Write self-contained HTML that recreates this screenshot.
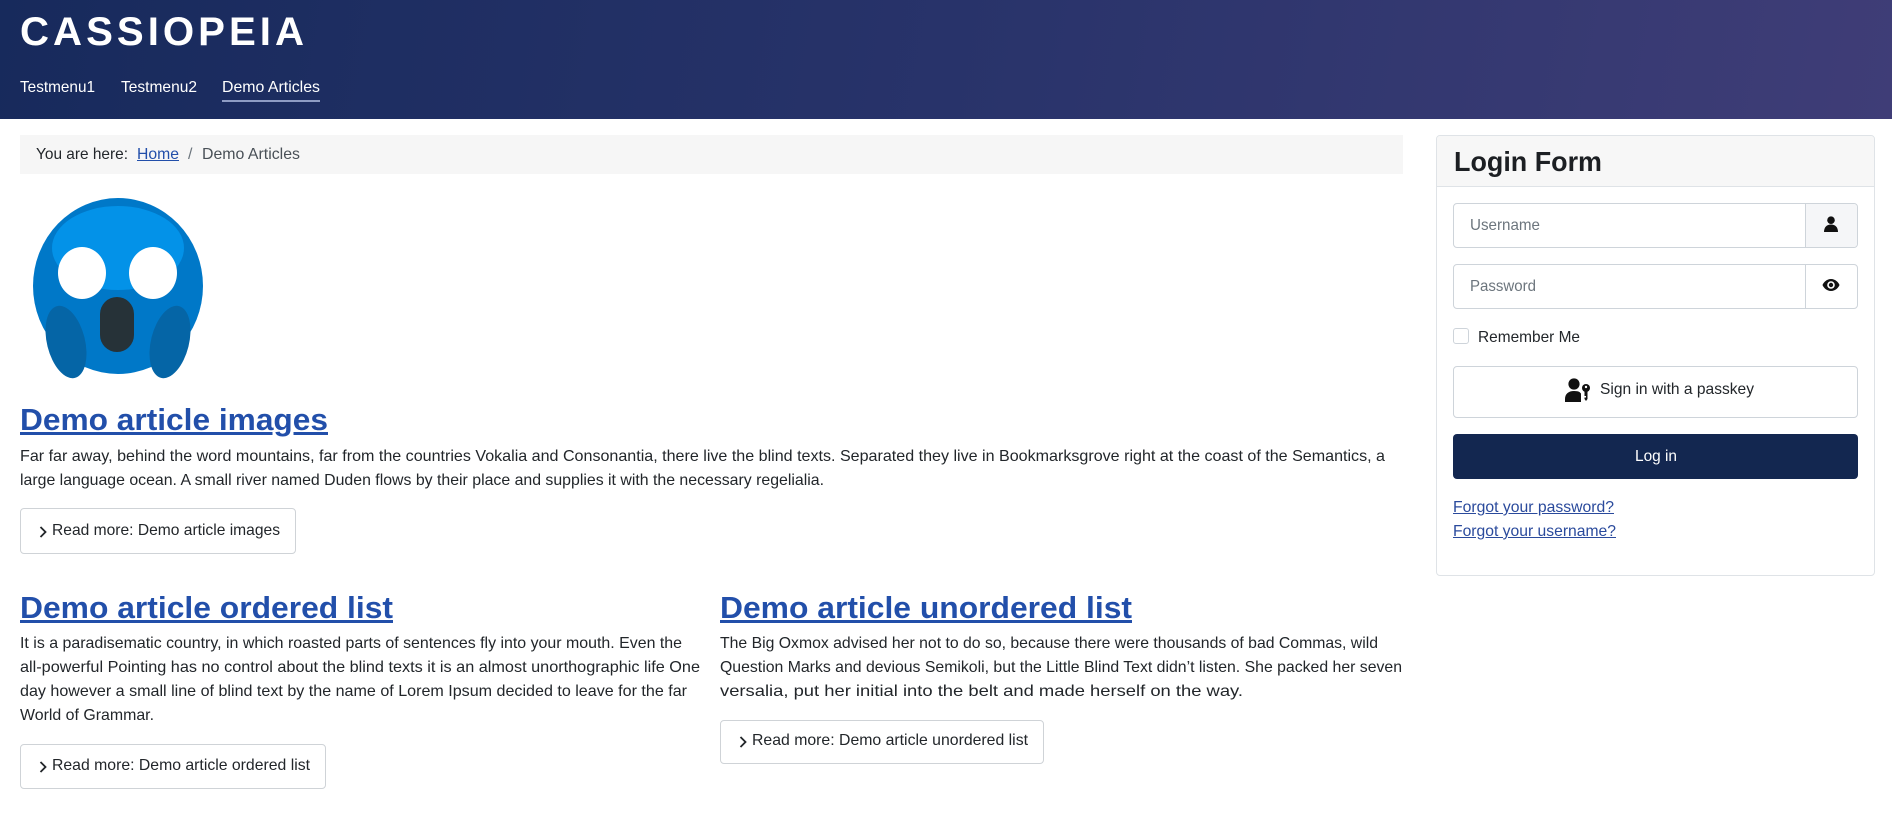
<!DOCTYPE html>
<html><head><meta charset="utf-8">
<style>
*{margin:0;padding:0;box-sizing:border-box}
html,body{width:1892px;height:819px;overflow:hidden;background:#fff}
body{position:relative;font-family:"Liberation Sans",Arial,sans-serif;color:#22262a}
.a{position:absolute}
.t{position:absolute;white-space:nowrap;line-height:1;transform-origin:0 0}
.hdr{position:absolute;left:0;top:0;width:1892px;height:119px;background:linear-gradient(100deg,#172a5c 0%,#28336a 50%,#3f3d77 100%)}
.link{color:#224faa;text-decoration:underline}
.btn{position:absolute;border:1px solid #cfd3d7;border-radius:4px;background:#fff}
.inp{position:absolute;border:1px solid #ced4da;border-radius:4px;background:#fff}
</style></head><body>
<div class="hdr"></div>
<div class="t" style="left:20px;top:12px;font-size:40px;font-weight:bold;color:#fff;letter-spacing:4px;--w:288px">CASSIOPEIA</div>
<div class="t" style="left:20px;top:80px;font-size:16px;color:#fff;--w:75px">Testmenu1</div>
<div class="t" style="left:121px;top:80px;font-size:16px;color:#fff;--w:76px">Testmenu2</div>
<div class="t" style="left:222px;top:80px;font-size:16px;color:#fff;--w:98px">Demo Articles</div>
<div class="a" style="left:222px;top:100px;width:98px;height:2px;background:#8e9cc4"></div>

<div class="a" style="left:20px;top:135px;width:1383px;height:39px;background:#f6f6f6"></div>
<div class="t" style="left:36px;top:147px;font-size:16px;--w:92px">You are here:</div>
<div class="t link" style="left:137px;top:147px;font-size:16px;--w:42px">Home</div>
<div class="t" style="left:188px;top:147px;font-size:16px;color:#6c757d">/</div>
<div class="t" style="left:202px;top:147px;font-size:16px;color:#495057;--w:98px">Demo Articles</div>

<svg class="a" style="left:33px;top:198px" width="170" height="182" viewBox="0 0 170 182">
<defs><clipPath id="hc"><ellipse cx="85" cy="88" rx="85" ry="88"/></clipPath></defs>
<ellipse cx="85" cy="88" rx="85" ry="88" fill="#0078c8"/>
<ellipse cx="85" cy="50" rx="66" ry="42" fill="#0392e8" clip-path="url(#hc)"/>
<ellipse cx="49" cy="75" rx="24" ry="26" fill="#fff"/>
<ellipse cx="120" cy="75" rx="24" ry="26" fill="#fff"/>
<rect x="67" y="99" width="34" height="55" rx="17" fill="#263238"/>
<ellipse cx="33" cy="144" rx="19" ry="37" transform="rotate(-14 33 144)" fill="#0565a6"/>
<ellipse cx="137" cy="144" rx="19" ry="37" transform="rotate(14 137 144)" fill="#0565a6"/>
</svg>

<div class="t link" style="left:20px;top:404px;font-size:31px;font-weight:bold;--w:308px">Demo article images</div>
<div class="t" style="left:20px;top:449px;font-size:16px;--w:1365px">Far far away, behind the word mountains, far from the countries Vokalia and Consonantia, there live the blind texts. Separated they live in Bookmarksgrove right at the coast of the Semantics, a</div>
<div class="t" style="left:20px;top:473px;font-size:16px;--w:804px">large language ocean. A small river named Duden flows by their place and supplies it with the necessary regelialia.</div>
<div class="btn" style="left:20px;top:508px;width:276px;height:46px"></div>
<svg class="a" style="left:39px;top:526px" width="8" height="12" viewBox="0 0 8 12"><path d="M1.5 1l5 5-5 5" fill="none" stroke="#22262a" stroke-width="1.8"/></svg>
<div class="t" style="left:52px;top:523px;font-size:16px;--w:228px">Read more: Demo article images</div>

<div class="t link" style="left:20px;top:592px;font-size:31px;font-weight:bold;--w:373px">Demo article ordered list</div>
<div class="t" style="left:20px;top:636px;font-size:16px;--w:662px">It is a paradisematic country, in which roasted parts of sentences fly into your mouth. Even the</div>
<div class="t" style="left:20px;top:660px;font-size:16px;--w:680px">all-powerful Pointing has no control about the blind texts it is an almost unorthographic life One</div>
<div class="t" style="left:20px;top:684px;font-size:16px;--w:667px">day however a small line of blind text by the name of Lorem Ipsum decided to leave for the far</div>
<div class="t" style="left:20px;top:708px;font-size:16px;--w:134px">World of Grammar.</div>
<div class="btn" style="left:20px;top:744px;width:306px;height:45px"></div>
<svg class="a" style="left:39px;top:761px" width="8" height="12" viewBox="0 0 8 12"><path d="M1.5 1l5 5-5 5" fill="none" stroke="#22262a" stroke-width="1.8"/></svg>
<div class="t" style="left:52px;top:758px;font-size:16px;--w:258px">Read more: Demo article ordered list</div>

<div class="t link" style="left:720px;top:592px;font-size:31px;font-weight:bold;--w:412px">Demo article unordered list</div>
<div class="t" style="left:720px;top:636px;font-size:16px;--w:658px">The Big Oxmox advised her not to do so, because there were thousands of bad Commas, wild</div>
<div class="t" style="left:720px;top:660px;font-size:16px;--w:682px">Question Marks and devious Semikoli, but the Little Blind Text didn’t listen. She packed her seven</div>
<div class="t" style="left:720px;top:684px;font-size:16px;--w:523px">versalia, put her initial into the belt and made herself on the way.</div>
<div class="btn" style="left:720px;top:720px;width:324px;height:44px"></div>
<svg class="a" style="left:739px;top:736px" width="8" height="12" viewBox="0 0 8 12"><path d="M1.5 1l5 5-5 5" fill="none" stroke="#22262a" stroke-width="1.8"/></svg>
<div class="t" style="left:752px;top:733px;font-size:16px;--w:276px">Read more: Demo article unordered list</div>

<div class="a" style="left:1436px;top:135px;width:439px;height:441px;border:1px solid #dfe3e7;border-radius:4px;overflow:hidden">
  <div style="height:51px;background:#f7f7f7;border-bottom:1px solid #dfe3e7"></div>
</div>
<div class="t" style="left:1454px;top:148px;font-size:28px;font-weight:bold;color:#1c1f23;--w:148px">Login Form</div>

<div class="inp" style="left:1453px;top:203px;width:405px;height:45px"></div>
<div class="a" style="left:1805px;top:204px;width:52px;height:43px;background:#f5f6f8;border-left:1px solid #ced4da;border-radius:0 4px 4px 0"></div>
<svg class="a" style="left:1824px;top:216px" width="14" height="16" viewBox="0 0 14 16"><circle cx="7" cy="4.2" r="3.8" fill="#111"/><path d="M0 16c0-5 3-7.5 7-7.5s7 2.5 7 7.5z" fill="#111"/></svg>
<div class="t" style="left:1470px;top:218px;font-size:16px;color:#6c757d;--w:70px">Username</div>

<div class="inp" style="left:1453px;top:264px;width:405px;height:45px"></div>
<div class="a" style="left:1805px;top:265px;width:1px;height:43px;background:#ced4da"></div>
<svg class="a" style="left:1822px;top:277px" width="18" height="16" viewBox="0 0 18 16"><path d="M9 2C4.5 2 1.5 5.5 .5 8c1 2.5 4 6 8.5 6s7.5-3.5 8.5-6C16.5 5.5 13.5 2 9 2z" fill="#111"/><circle cx="9" cy="8" r="3.8" fill="#fff"/><circle cx="9" cy="8" r="2.2" fill="#111"/></svg>
<div class="t" style="left:1470px;top:279px;font-size:16px;color:#6c757d;--w:66px">Password</div>

<div class="a" style="left:1453px;top:328px;width:16px;height:16px;border:1px solid #ced4da;border-radius:3px"></div>
<div class="t" style="left:1478px;top:330px;font-size:16px;--w:102px">Remember Me</div>

<div class="btn" style="left:1453px;top:366px;width:405px;height:52px;border-color:#ced4da"></div>
<svg class="a" style="left:1565px;top:378px" width="26" height="24" viewBox="0 0 26 24"><circle cx="9" cy="6" r="5.6" fill="#111"/><path d="M0 24v-3c0-5 3.5-8 9-8s6 1.5 7 2.5v8.5z" fill="#111"/><circle cx="21" cy="10" r="4" fill="#111"/><circle cx="21" cy="9" r="1.2" fill="#fff"/><path d="M19.5 13h3v8l-1.5 2-1.5-2v-1.5h1.5v-1.5h-1.5z" fill="#111"/></svg>
<div class="t" style="left:1600px;top:382px;font-size:16px;color:#22262a;--w:154px">Sign in with a passkey</div>

<div class="a" style="left:1453px;top:434px;width:405px;height:45px;background:#132750;border-radius:4px"></div>
<div class="t" style="left:1635px;top:449px;font-size:16px;color:#fff;--w:42px">Log in</div>

<div class="t" style="left:1453px;top:500px;font-size:16px;color:#2a4a9c;text-decoration:underline;--w:161px">Forgot your password?</div>
<div class="t" style="left:1453px;top:524px;font-size:16px;color:#2a4a9c;text-decoration:underline;--w:163px">Forgot your username?</div>

<script>
document.querySelectorAll('.t').forEach(function(e){
  var w=parseFloat(getComputedStyle(e).getPropertyValue('--w'));
  if(!w)return;
  var r=e.getBoundingClientRect().width;
  if(r>0)e.style.transform='scaleX('+(w/r)+')';
});
</script>
</body></html>
